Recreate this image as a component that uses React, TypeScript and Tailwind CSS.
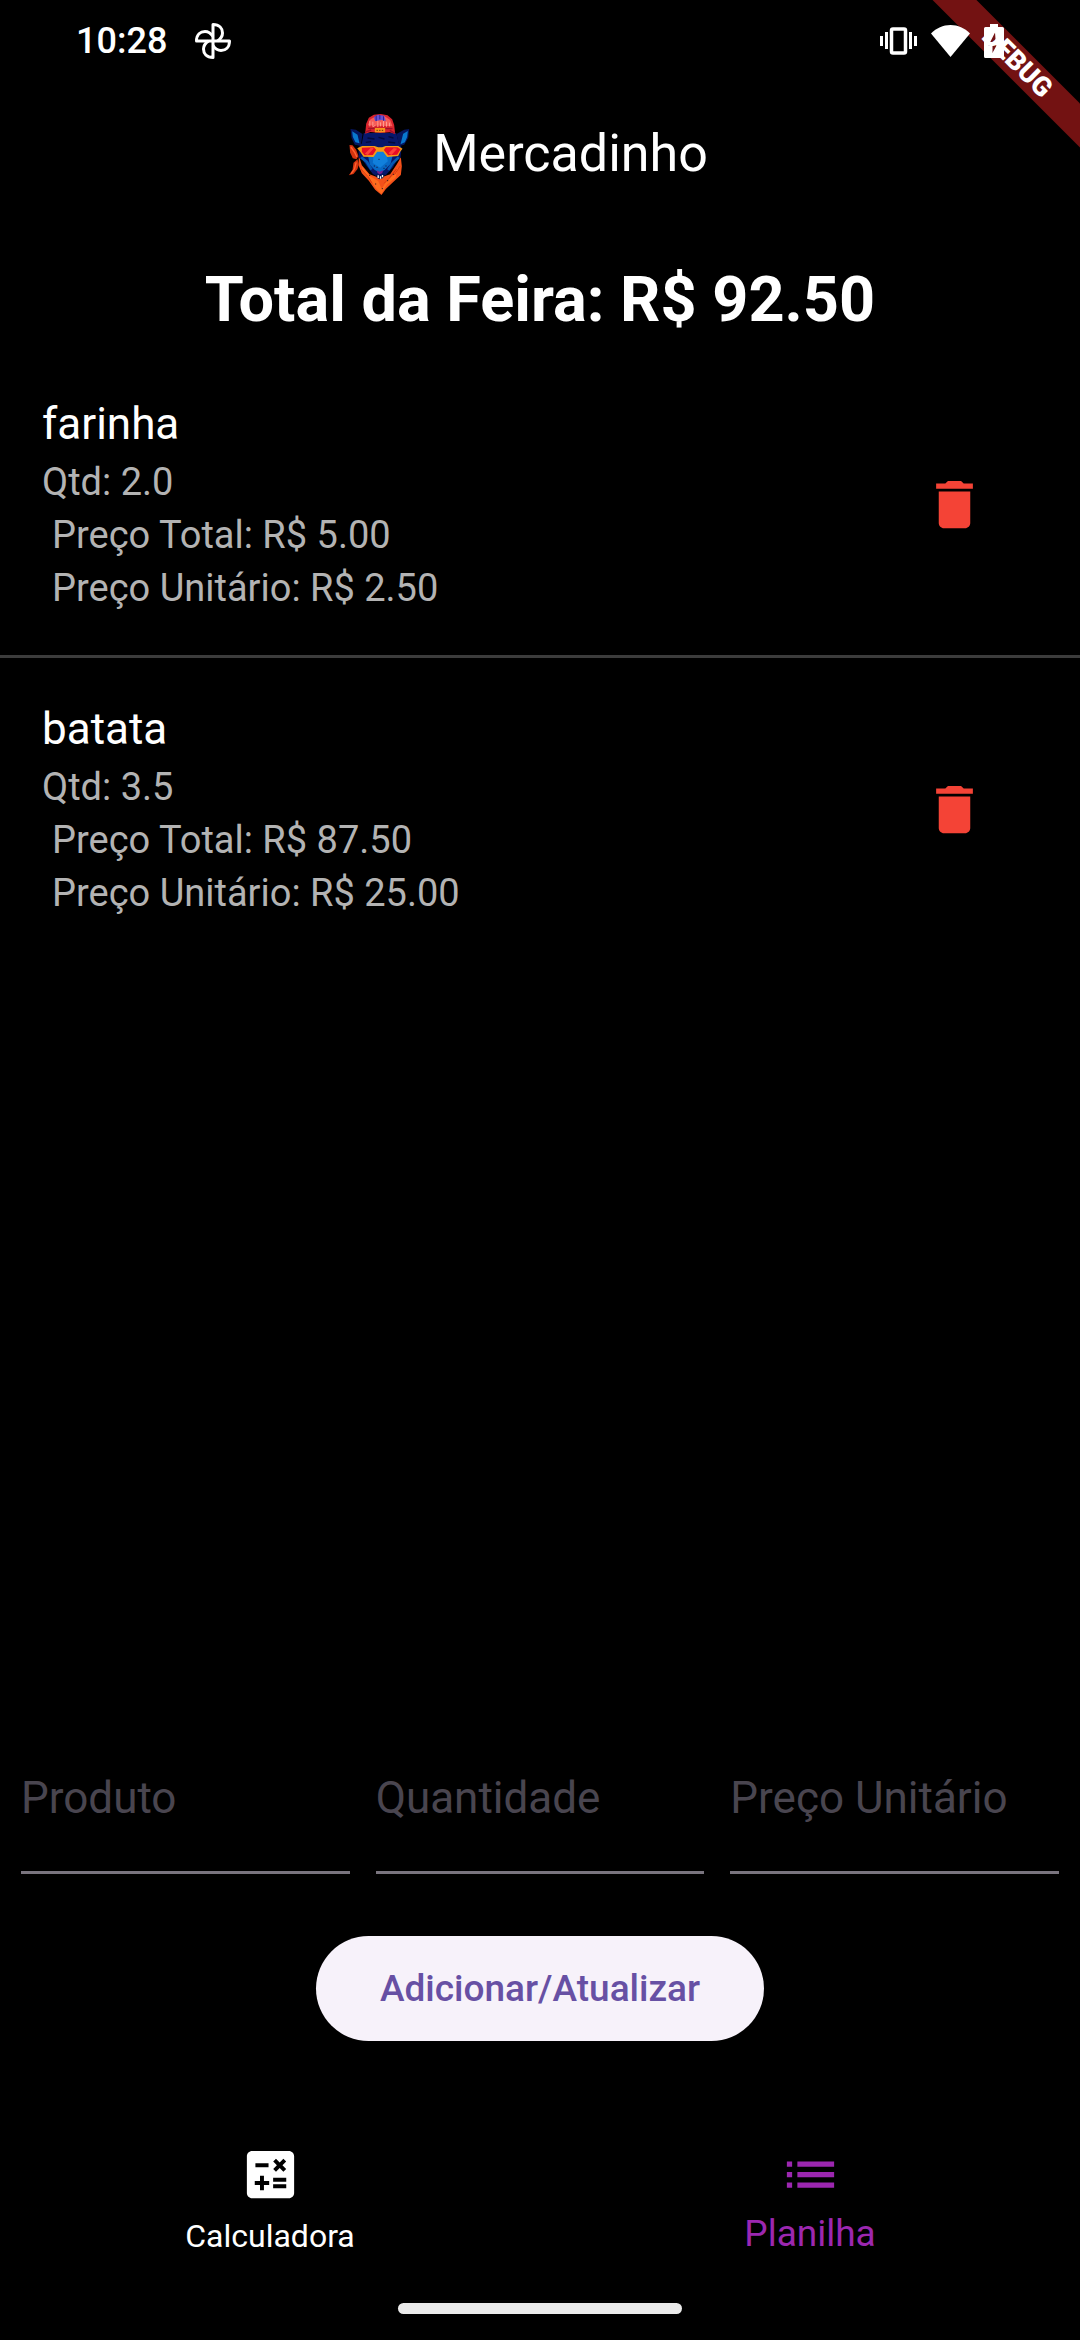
import { useState } from "react";
import { MdCalculate, MdDelete, MdList } from "react-icons/md";

type Item = { name: string; qty: number; unit: number };

const initialItems: Item[] = [
  { name: "farinha", qty: 2, unit: 2.5 },
  { name: "batata", qty: 3.5, unit: 25 },
];

const fields = [
  { id: "produto", label: "Produto" },
  { id: "quantidade", label: "Quantidade" },
  { id: "preco", label: "Preço Unitário" },
];

function PinwheelIcon() {
  return (
    <svg className="h-9 w-9" viewBox="0 0 36 36" fill="none" stroke="white" strokeWidth="3" strokeLinejoin="round">
      <path d="M18 18V1.500C24.500 1.500 27.500 5.500 27.500 10C27.500 13.500 25.500 16 22.500 18" />
      <path d="M18 18H34.500C34.500 24.500 30.500 27.500 26 27.500C22.500 27.500 20 25.500 18 22.500" />
      <path d="M18 18V34.500C11.500 34.500 8.500 30.500 8.500 26C8.500 22.500 10.500 20 13.500 18" />
      <path d="M18 18H1.500C1.500 11.500 5.500 8.500 10 8.500C13.500 8.500 16 10.500 18 13.500" />
    </svg>
  );
}

function VibrateIcon() {
  return (
    <svg className="h-7 w-[37px]" viewBox="0 0 37 28" fill="white">
      <rect x="0" y="9" width="3" height="10" />
      <rect x="5" y="5" width="3" height="17" />
      <rect x="11.500" y="2" width="14" height="24" rx="1.500" fill="none" stroke="white" strokeWidth="3.500" />
      <rect x="29" y="5" width="3" height="17" />
      <rect x="34" y="9" width="3" height="10" />
    </svg>
  );
}

function WifiIcon() {
  return (
    <svg className="h-8 w-[39px]" viewBox="0 0 39 32" fill="white">
      <path d="M0 8.500C5.500 3 12 0 19.500 0S33.500 3 39 8.500L19.500 32Z" />
    </svg>
  );
}

function BatteryIcon() {
  return (
    <svg className="h-[34px] w-5" viewBox="0 0 20 34" fill="white" fillRule="evenodd">
      <path d="M6 0H14V3H18.500Q20 3 20 4.500V32.500Q20 34 18.500 34H1.500Q0 34 0 32.500V4.500Q0 3 1.500 3H6ZM11 8.500L4.500 21.500H8.500V29L12.500 21.500L9.500 20L11.500 15Z" />
    </svg>
  );
}

function Logo() {
  return (
    <svg className="h-[83px] w-[63px]" viewBox="60 48 188 249" role="img" aria-label="Mercadinho">
      {/* bandana */}
      <path d="M92 176L101 205L124 232L154 243L186 232L206 202L218 181L221 208L218 234L192 258L173 276L160 294L141 278L122 251L101 229L91 205Z" fill="#f4511a" />
      <path d="M101 208L126 238L150 252L161 276L174 253L201 230L211 207L202 242L176 263L160 290L144 275L127 250L104 225Z" fill="#ff6c1e" />
      <path d="M98 216L120 239L132 259M205 216L183 244L168 259M216 207L199 233" fill="none" stroke="#d93a10" strokeWidth="3" />
      <path d="M64 144L73 145L84 158L91 177L85 187L74 184L66 167Z" fill="#d5330f" />
      <path d="M88 187L76 197L73 219L62 235L76 231L88 216L92 202Z" fill="#d5330f" />
      <path d="M68 150L80 167L86 180M84 196L79 216L69 230" fill="none" stroke="#ff6330" strokeWidth="4" />
      {/* ears and head */}
      <path d="M67 96L83 98L103 111L98 147L80 143L70 123ZM243 96L228 98L205 111L213 147L228 143L240 123Z" fill="#05165f" />
      <path d="M72 103L88 113L94 139L82 136L74 120ZM239 102L225 110L217 142L230 136L237 120Z" fill="#0877ce" />
      <path d="M107 108L204 108L212 139L220 151L217 182L205 191L195 210L174 233L154 243L134 231L116 208L105 191L92 182L91 152L101 139Z" fill="#07176a" />
      <path d="M119 173L138 161L155 153L173 163L194 174L187 201L170 218L155 228L139 218L125 203Z" fill="#0868c4" />
      <path d="M137 167L155 158L174 168L179 193L156 212L134 198Z" fill="#1180dc" />
      <path d="M99 181L116 195L130 218M212 181L193 199L180 219" fill="none" stroke="#0759b1" strokeWidth="8" />
      <path d="M118 123L139 126M151 121L169 126M181 119L196 123M113 136L129 134M180 135L201 138" stroke="#03093b" strokeWidth="4" />
      {/* cap */}
      <path d="M111 110L114 80L122 62L137 53L158 51L178 55L192 67L198 84L201 111L185 106L156 108L127 105Z" fill="#d9242d" />
      <path d="M119 85L127 67L144 58L168 57L186 69L193 88Z" fill="#f65c57" />
      <path d="M137 61L149 53L168 56L173 72L161 69L141 72Z" fill="#6551d5" />
      <path d="M144 56V72M155 54V67M166 58V71" stroke="#2b248e" strokeWidth="3" />
      <path d="M125 71V88M134 74V89L142 85M149 72V90M157 76V88M166 72V90M175 74V89M184 77V88" fill="none" stroke="#ff9a8c" strokeWidth="3" />
      <path d="M120 94L193 95M112 105L129 99M185 100L200 109" stroke="#9d102a" strokeWidth="4" />
      <path d="M140 93H171V106H140Z" fill="#f8941d" />
      <path d="M145 100H167" stroke="#663018" strokeWidth="3" strokeDasharray="4 4" />
      {/* sunglasses */}
      <path d="M87 154L102 147L139 147L150 151H162L172 147L210 147L223 155L217 163L210 177L177 180L165 164H147L136 180L106 179L96 164Z" fill="#f69914" />
      <path d="M101 152L137 151L144 158L134 174L109 175L101 164ZM173 151L208 151L217 157L207 173L180 175L167 159Z" fill="#e80c25" />
      <path d="M110 170L128 152L137 154L119 174ZM181 169L197 153L207 155L190 174Z" fill="#ff4038" />
      {/* snout */}
      <path d="M146 220L155 224L165 220L162 229L154 232L148 228Z" fill="#75208b" />
      <path d="M143 232L154 238L168 231L165 243L154 247L146 242Z" fill="#071144" />
      <path d="M150 235V243M157 238V245M163 234V241" stroke="white" strokeWidth="4" />
      <path d="M151 187H154M137 207H140M172 207H175M145 211H148M166 214H169M115 219H118M123 235H126M141 261H144M177 251H180M194 232H197M161 275H164" stroke="#150e25" strokeWidth="3" />
    </svg>
  );
}

export default function App() {
  const [items, setItems] = useState(initialItems);
  const total = items.reduce((sum, item) => sum + item.qty * item.unit, 0);

  return (
    <div className="relative flex min-h-screen flex-col overflow-hidden bg-black font-[Roboto,sans-serif] text-white">
      <div className="absolute -right-[87px] top-[47px] flex h-[31px] w-[300px] rotate-45 items-center justify-center bg-[#731212] text-[27px] font-black">
        DEBUG
      </div>

      <div className="relative flex h-[82px] items-center justify-between pr-[76px] pl-[76px]">
        <div className="flex items-center gap-7">
          <span className="text-4xl font-medium">10:28</span>
          <PinwheelIcon />
        </div>
        <div className="flex items-center gap-3.5">
          <VibrateIcon />
          <WifiIcon />
          <BatteryIcon />
        </div>
      </div>

      <header className="flex h-36 items-center justify-center gap-[22px] pr-6">
        <Logo />
        <h1 className="text-[52px]">Mercadinho</h1>
      </header>

      <main className="flex flex-1 flex-col">
        <h2 className="py-9 text-center text-[63px] leading-[75px] font-bold">
          Total da Feira: R$ {total.toFixed(2)}
        </h2>

        <ul className="flex-1">
          {items.map((item) => (
            <li
              key={item.name}
              className="flex items-center justify-between border-[#3c3c3c] pr-[63px] pb-10 pl-[42px] not-first:border-t-3 not-first:pt-10 first:pt-5"
            >
              <div>
                <h3 className="text-[44px] leading-[63px]">{item.name}</h3>
                <div className="text-[38px] leading-[53px] text-[#b3b3b3]">
                  <p>Qtd: {item.qty.toFixed(1)}</p>
                  <p className="pl-2.5">Preço Total: R$ {(item.qty * item.unit).toFixed(2)}</p>
                  <p className="pl-2.5">Preço Unitário: R$ {item.unit.toFixed(2)}</p>
                </div>
              </div>
              <button
                type="button"
                aria-label={`Remover ${item.name}`}
                onClick={() => setItems(items.filter((other) => other !== item))}
                className="flex size-[126px] items-center justify-center text-[#f44336]"
              >
                <MdDelete className="size-[63px]" />
              </button>
            </li>
          ))}
        </ul>

        <form className="flex flex-col items-center" onSubmit={(event) => event.preventDefault()}>
          <div className="grid w-full grid-cols-3 gap-[26px] px-[21px]">
            {fields.map((field) => (
              <div key={field.id} className="grid items-center text-[44px]">
                <input
                  id={field.id}
                  placeholder=" "
                  className="peer col-start-1 row-start-1 h-[152px] w-full rounded-none border-b-3 border-[#79747e] bg-transparent outline-none"
                />
                <label
                  htmlFor={field.id}
                  className="invisible col-start-1 row-start-1 cursor-text whitespace-nowrap text-[#49454f] peer-placeholder-shown:visible"
                >
                  {field.label}
                </label>
              </div>
            ))}
          </div>
          <button
            type="submit"
            className="mt-[62px] h-[105px] rounded-full bg-[#f7f2fa] px-16 text-[37px] font-medium text-[#6750a4]"
          >
            Adicionar/Atualizar
          </button>
        </form>
      </main>

      <nav className="mt-[102px] grid grid-cols-2 items-start">
        <button type="button" className="flex flex-col items-center text-[32px] leading-[60px]">
          <MdCalculate className="size-[63px]" />
          Calculadora
        </button>
        <button type="button" aria-current="page" className="flex flex-col items-center text-[37px] leading-[56px] text-[#9c27b0]">
          <MdList className="size-[63px]" />
          Planilha
        </button>
      </nav>
      <div className="mx-auto mt-[37px] mb-[26px] h-[11px] w-[284px] rounded-full bg-[#ebebeb]" />
    </div>
  );
}
